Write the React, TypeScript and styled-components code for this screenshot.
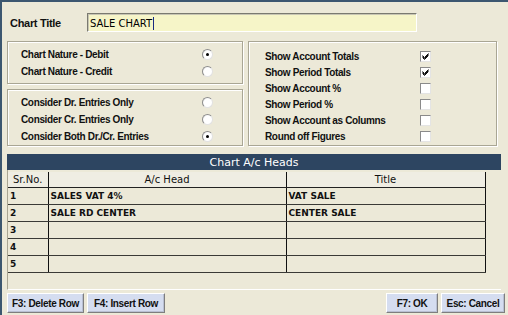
import React from "react";
import styled, { createGlobalStyle } from "styled-components";

const GlobalStyle = createGlobalStyle`
  html, body { margin: 0; padding: 0; background: #ECE9D8; }
`;

const Window = styled.div`
  width: 508px;
  height: 315px;
  box-sizing: border-box;
  background: #ECE9D8;
  border-top: 2px solid #3C5770;
  border-left: 2px solid #3C5770;
  padding: 11px 3px 0 5px;
  display: flex;
  flex-direction: column;
  font-family: "Liberation Sans", Arial, sans-serif;
  color: #111;
  overflow: hidden;
`;

const TitleRow = styled.div`
  display: flex;
  align-items: center;
  height: 19px;
`;

const TitleLabel = styled.div`
  width: 80px;
  padding-left: 3px;
  box-sizing: border-box;
  font-size: 11px;
  font-weight: bold;
  letter-spacing: -0.3px;
`;

const TitleInput = styled.div`
  width: 330px;
  height: 19px;
  box-sizing: border-box;
  background: #F6F5C8;
  border-top: 1px solid #7A7A70;
  border-left: 1px solid #7A7A70;
  border-right: 1px solid #fff;
  border-bottom: 1px solid #fff;
  box-shadow: inset 1px 1px 0 #C8C6B4;
  padding: 2px 2px 0 2px;
  font-family: "DejaVu Sans", Verdana, sans-serif;
  font-size: 10px;
  line-height: 14px;
  color: #000;
  display: flex;
  align-items: center;
`;

const Caret = styled.span`
  display: inline-block;
  width: 1px;
  height: 13px;
  background: #1A2A80;
  margin-left: 1px;
`;

const Options = styled.div`
  margin-top: 9px;
  display: grid;
  grid-template-columns: 236px 249px;
  column-gap: 5px;
  height: 105px;
`;

const LeftColumn = styled.div`
  display: flex;
  flex-direction: column;
  gap: 5px;
`;

const GroupBox = styled.div<{ $h?: number; $pl: number; $pt: number }>`
  box-sizing: border-box;
  height: ${(p) => (p.$h ? `${p.$h}px` : "100%")};
  border: 1px solid #A9A694;
  box-shadow: inset 1px 1px 0 #fff, 1px 1px 0 #fff;
  padding: ${(p) => p.$pt}px 0 0 ${(p) => p.$pl}px;
  display: flex;
  flex-direction: column;
`;

const OptionRow = styled.div<{ $labelW: number; $rowH: number }>`
  display: grid;
  grid-template-columns: ${(p) => p.$labelW}px 11px;
  align-items: center;
  height: ${(p) => p.$rowH}px;
  font-size: 10px;
  font-weight: bold;
  letter-spacing: -0.35px;
  white-space: nowrap;
`;

const Radio = styled.span<{ $on?: boolean }>`
  width: 11px;
  height: 11px;
  box-sizing: border-box;
  border-radius: 50%;
  border: 1px solid #8E8E8E;
  border-right-color: #E2E2E2;
  border-bottom-color: #E2E2E2;
  background: radial-gradient(circle at 60% 60%, #fff 55%, #E6E6E6 100%);
  display: flex;
  align-items: center;
  justify-content: center;
  &::after {
    content: "";
    width: 3px;
    height: 3px;
    border-radius: 50%;
    background: ${(p) => (p.$on ? "#000" : "transparent")};
  }
`;

const Check = styled.span`
  width: 11px;
  height: 11px;
  box-sizing: border-box;
  border-top: 1px solid #8A8A8A;
  border-left: 1px solid #8A8A8A;
  border-right: 1px solid #E4E4E4;
  border-bottom: 1px solid #E4E4E4;
  background: #fff;
  display: flex;
  align-items: center;
  justify-content: center;
`;

const GridPanel = styled.div`
  margin-top: 8px;
  width: 494px;
  height: 136px;
  box-sizing: border-box;
  border-left: 1px solid #A9A694;
  border-bottom: 1px solid #fff;
  display: flex;
  flex-direction: column;
`;

const HeaderBar = styled.div`
  height: 16px;
  background: #2D4561;
  color: #fff;
  font-family: "DejaVu Sans", Verdana, sans-serif;
  font-size: 11px;
  display: flex;
  align-items: center;
  justify-content: center;
  margin-left: -1px;
`;

const Table = styled.table`
  margin-top: 2px;
  width: 477px;
  border-collapse: collapse;
  table-layout: fixed;
  font-family: "DejaVu Sans", Verdana, sans-serif;
  font-size: 9px;
  border-right: 1px solid #111;
  border-bottom: 1px solid #111;
`;

const HeadCell = styled.th`
  height: 15px;
  padding: 0;
  background: #EFEDE3;
  font-weight: normal;
  font-size: 10px;
  text-align: center;
  border-right: 1px solid #111;
  border-bottom: 1px solid #222;
  &:first-child {
    text-align: left;
    padding-left: 5px;
  }
`;

const Cell = styled.td`
  height: 16px;
  padding: 0 0 0 2px;
  font-weight: bold;
  border-right: 1px solid #111;
  border-bottom: 1px solid #3A3A36;
  white-space: nowrap;
  overflow: hidden;
`;

const ButtonRow = styled.div`
  margin-top: 3px;
  display: flex;
  justify-content: space-between;
`;

const ButtonGroup = styled.div`
  display: flex;
  gap: 3px;
`;

const Button = styled.button<{ $w: number }>`
  width: ${(p) => p.$w}px;
  height: 20px;
  box-sizing: border-box;
  padding: 0;
  background: #D5DDF0;
  border-top: 1px solid #fff;
  border-left: 1px solid #fff;
  border-right: 1px solid #7E7E7E;
  border-bottom: 1px solid #7E7E7E;
  box-shadow: inset -1px -1px 0 #B9C0D3;
  font-family: "Liberation Sans", Arial, sans-serif;
  font-size: 10px;
  font-weight: bold;
  letter-spacing: -0.35px;
  color: #111;
`;

const CheckMark = () => (
  <svg width="9" height="9" viewBox="0 0 9 9">
    <path
      d="M1.5 3.5 L3.5 5.5 L7.5 1.5 M1.5 4.5 L3.5 6.5 L7.5 2.5 M1.5 5.5 L3.5 7.5 L7.5 3.5"
      stroke="#111"
      strokeWidth="1"
      fill="none"
    />
  </svg>
);

const rows = [
  { sr: "1", head: "SALES VAT 4%", title: "VAT SALE" },
  { sr: "2", head: "SALE RD CENTER", title: "CENTER SALE" },
  { sr: "3", head: "", title: "" },
  { sr: "4", head: "", title: "" },
  { sr: "5", head: "", title: "" },
];

const checks = [
  { label: "Show Account Totals", on: true },
  { label: "Show Period Totals", on: true },
  { label: "Show Account %", on: false },
  { label: "Show Period %", on: false },
  { label: "Show Account as Columns", on: false },
  { label: "Round off Figures", on: false },
];

export default function App() {
  return (
    <>
      <GlobalStyle />
      <Window>
        <TitleRow>
          <TitleLabel>Chart Title</TitleLabel>
          <TitleInput>
            SALE CHART
            <Caret />
          </TitleInput>
        </TitleRow>

        <Options>
          <LeftColumn>
            <GroupBox $h={43} $pl={13} $pt={4}>
              <OptionRow $labelW={181} $rowH={17}>
                <span>Chart Nature - Debit</span>
                <Radio $on />
              </OptionRow>
              <OptionRow $labelW={181} $rowH={17}>
                <span>Chart Nature - Credit</span>
                <Radio />
              </OptionRow>
            </GroupBox>
            <GroupBox $h={57} $pl={13} $pt={4}>
              <OptionRow $labelW={181} $rowH={17}>
                <span>Consider Dr. Entries Only</span>
                <Radio />
              </OptionRow>
              <OptionRow $labelW={181} $rowH={17}>
                <span>Consider Cr. Entries Only</span>
                <Radio />
              </OptionRow>
              <OptionRow $labelW={181} $rowH={17}>
                <span>Consider Both Dr./Cr. Entries</span>
                <Radio $on />
              </OptionRow>
            </GroupBox>
          </LeftColumn>
          <GroupBox $pl={16} $pt={6}>
            {checks.map((c) => (
              <OptionRow key={c.label} $labelW={155} $rowH={16}>
                <span>{c.label}</span>
                <Check>{c.on && <CheckMark />}</Check>
              </OptionRow>
            ))}
          </GroupBox>
        </Options>

        <GridPanel>
          <HeaderBar>Chart A/c Heads</HeaderBar>
          <Table>
            <colgroup>
              <col style={{ width: 40 }} />
              <col style={{ width: 238 }} />
              <col style={{ width: 199 }} />
            </colgroup>
            <thead>
              <tr>
                <HeadCell>Sr.No.</HeadCell>
                <HeadCell>A/c Head</HeadCell>
                <HeadCell>Title</HeadCell>
              </tr>
            </thead>
            <tbody>
              {rows.map((r) => (
                <tr key={r.sr}>
                  <Cell>{r.sr}</Cell>
                  <Cell>{r.head}</Cell>
                  <Cell>{r.title}</Cell>
                </tr>
              ))}
            </tbody>
          </Table>
        </GridPanel>

        <ButtonRow>
          <ButtonGroup>
            <Button $w={77}>F3: Delete Row</Button>
            <Button $w={78}>F4: Insert Row</Button>
          </ButtonGroup>
          <ButtonGroup>
            <Button $w={52}>F7: OK</Button>
            <Button $w={64}>Esc: Cancel</Button>
          </ButtonGroup>
        </ButtonRow>
      </Window>
    </>
  );
}
